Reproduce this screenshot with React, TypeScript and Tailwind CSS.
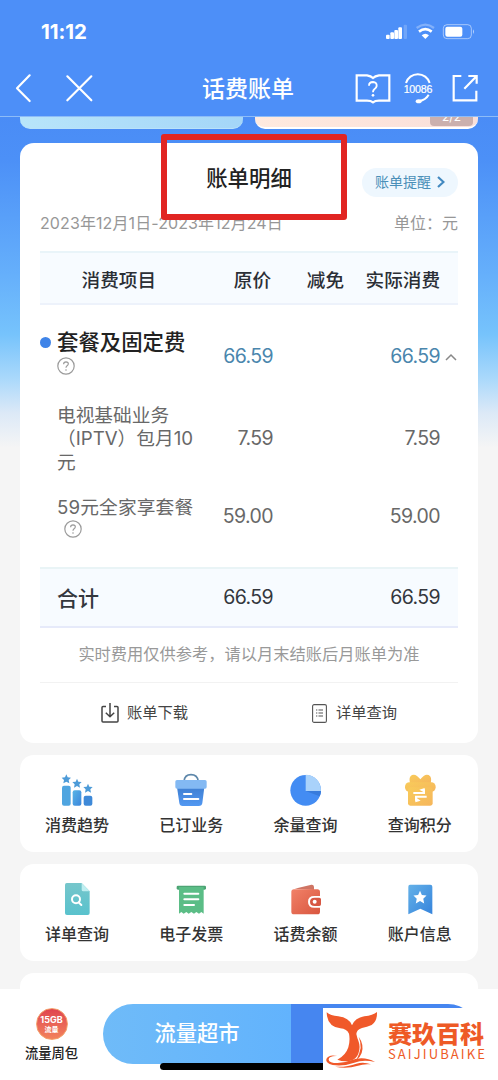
import type { ReactNode } from "react";

interface BillRow {
  name: string[];
  price: string;
  actual: string;
}

interface Shortcut {
  label: string;
  icon: ReactNode;
}

const rowGrid = "grid grid-cols-[162px_71px_71px_96px_18px]";

const STAR = "M0 -14 L4 -5 L14 -4 L7 3 L9 13 L0 8 L-9 13 L-7 3 L-14 -4 L-4 -5 Z";

function StatusIcons() {
  return (
    <svg className="h-6 w-[92px]" viewBox="1152 60 276 72" fill="#fff">
      <rect x="1158" y="104" width="11" height="13" rx="3" />
      <rect x="1171" y="97" width="11" height="20" rx="3" />
      <rect x="1183" y="90" width="11" height="27" rx="3" />
      <rect x="1195" y="82" width="11" height="35" rx="3" />
      <rect x="1211" y="74" width="10" height="43" rx="3" opacity="0.2" />
      <path d="M1250 84 Q1276 64 1302 84" fill="none" stroke="#fff" strokeWidth="7" opacity="0.3" />
      <path d="M1257 95 Q1276 80 1295 95" fill="none" stroke="#fff" strokeWidth="8" />
      <path d="M1265 106 Q1276 97 1287 106 L1276 117 Z" />
      <rect x="1330" y="74" width="84" height="42" rx="11" fill="none" stroke="#fff" strokeWidth="3" opacity="0.5" />
      <rect x="1336" y="80" width="51" height="30" rx="6" />
      <path d="M1419 88 q6 7 0 14 Z" opacity="0.6" />
    </svg>
  );
}

function Header() {
  return (
    <header className="h-[116px] bg-[#4d8ff8] text-white">
      <div className="flex h-16 items-center justify-between pl-[41px] pr-[22px]">
        <span className="text-[20.5px] font-bold leading-none tracking-[-0.1px]">11:12</span>
        <StatusIcons />
      </div>
      <div className="flex h-12 items-center pl-3.5">
        <svg className="h-[30px] w-20" viewBox="45 219 240 90" fill="none" stroke="#fff" strokeWidth="6.5" strokeLinecap="round" strokeLinejoin="round">
          <path d="M92 226 L54 265 L92 303" />
          <path d="M205 229 L277 301 M277 229 L205 301" />
        </svg>
        <h1 className="ml-[108px] mt-0.5 w-[93px] whitespace-nowrap text-[23px] font-medium leading-none">话费账单</h1>
        <svg className="ml-[59px] h-9 w-[126px]" viewBox="1065 210 378 108" fill="none" stroke="#fff" strokeWidth="6.5">
          <path d="M1073 226 H1104 Q1116 228 1122 234 Q1128 228 1140 226 H1171 V302 H1140 Q1128 302 1122 307 Q1116 302 1104 302 H1073 Z" />
          <path d="M1110 257 Q1110 246 1122 246 Q1134 247 1133 258 Q1132 264 1126 268 Q1122 271 1122 277" strokeWidth="5.5" />
          <circle cx="1122" cy="286" r="4" fill="#fff" stroke="none" />
          <path d="M1221 249 A37 37 0 0 1 1292 249 M1289 284 Q1280 300 1261 303" strokeWidth="6" />
          <ellipse cx="1259" cy="304" rx="9" ry="6" fill="#fff" stroke="none" />
          <text x="1257" y="278" fill="#fff" stroke="#fff" strokeWidth="0.6" fontSize="32" textAnchor="middle" textLength="86" fontFamily="Liberation Sans, sans-serif">10086</text>
          <path d="M1387 228 H1364 V301 H1432 V272 M1433 251 V228 H1408 M1431 230 L1396 266" />
        </svg>
      </div>
    </header>
  );
}

function HelpIcon() {
  return (
    <svg className="block size-[18px]" viewBox="0 0 18 18" fill="none" stroke="#9b9b9b" strokeWidth="1.2">
      <circle cx="9" cy="9" r="8.2" />
      <path d="M6.6 7.2 Q6.7 4.9 9 4.9 Q11.4 5 11.3 7 Q11.2 8.2 9.9 8.9 Q9 9.5 9 10.8" />
      <circle cx="9" cy="13" r="0.8" fill="#9b9b9b" stroke="none" />
    </svg>
  );
}

function Amount({ children }: { children: ReactNode }) {
  return <span className="text-right text-[19.5px] leading-none tracking-[-0.6px]">{children}</span>;
}

function BillCard() {
  const iptv: BillRow = { name: ["电视基础业务", "（IPTV）包月10", "元"], price: "7.59", actual: "7.59" };
  const family: BillRow = { name: ["59元全家享套餐"], price: "59.00", actual: "59.00" };

  return (
    <section className="relative h-[600px] rounded-[14px] bg-white px-5">
      <div className="grid h-[62px] grid-cols-[1fr_auto_1fr] items-center pt-3.5">
        <h2 className="col-start-2 -mt-1 text-[21.4px] font-medium leading-none text-[#222]">账单明细</h2>
        <button className="mt-0.5 flex h-[29px] w-24 items-center justify-self-end rounded-full bg-[#eef7fe] pl-[13px] text-sm text-[#4a8fb8]">
          账单提醒
          <svg className="ml-1.5 h-3 w-2" viewBox="0 0 8 12" fill="none" stroke="#4289c0" strokeWidth="2.2">
            <path d="M1 1 L6.5 6 L1 11" />
          </svg>
        </button>
      </div>
      <div className="flex h-[46px] items-center justify-between pb-[11px] text-base leading-none text-[#979797]">
        <span className="tracking-[0.1px]">2023年12月1日-2023年12月24日</span>
        <span>单位：元</span>
      </div>

      <div className={`${rowGrid} h-[54px] items-center border-y-2 border-t-[#e9f4f9] border-b-[#edf2fb] bg-[#f7fbff] pt-1 text-right text-[18.6px] font-medium leading-none text-[#2b2f36]`}>
        <span className="pr-[46px]">消费项目</span>
        <span className="pr-0.5">原价</span>
        <span>减免</span>
        <span>实际消费</span>
      </div>

      <div className={`${rowGrid} h-[99px] items-center pt-1 text-[#4a86ad]`}>
        <div className="-mt-2.5 flex gap-1.5">
          <span className="mt-[9px] size-[11px] shrink-0 rounded-full bg-[#3f84e8]" />
          <div className="whitespace-nowrap">
            <div className="text-[21.4px] font-medium leading-[29px] text-[#222]">套餐及固定费</div>
            <HelpIcon />
          </div>
        </div>
        <Amount>{"66.59"}</Amount>
        <span />
        <Amount>{"66.59"}</Amount>
        <svg className="ml-[5px] h-2 w-3" viewBox="0 0 12 8" fill="none" stroke="#888" strokeWidth="1.5">
          <path d="M1 7 L6 2 L11 7" />
        </svg>
      </div>

      <div className={`${rowGrid} h-[70px] items-center text-[#686868]`}>
        <div className="whitespace-nowrap pl-[17px] text-[18.7px] leading-[23.4px]">
          {iptv.name.map((line) => (
            <div key={line}>{line}</div>
          ))}
        </div>
        <Amount>{iptv.price}</Amount>
        <span />
        <Amount>{iptv.actual}</Amount>
      </div>

      <div className={`${rowGrid} h-[93px] items-center pb-[7px] text-[#686868]`}>
        <div className="whitespace-nowrap pl-[17px] text-[18.7px] leading-[23.4px]">
          <div className="tracking-[0.15px]">{family.name}</div>
          <div className="pl-[7px] pt-px">
            <HelpIcon />
          </div>
        </div>
        <Amount>{family.price}</Amount>
        <span />
        <Amount>{family.actual}</Amount>
      </div>

      <div className={`${rowGrid} h-[61px] items-center border-y-2 border-t-[#e9f4f6] border-b-[#e6eafa] bg-[#f7fbff] text-[#33373d]`}>
        <span className="pl-[17px] pt-0.5 text-[21px] font-medium leading-none">合计</span>
        <Amount>{"66.59"}</Amount>
        <span />
        <Amount>{"66.59"}</Amount>
      </div>

      <p className="h-[55px] border-b border-[#f2f2f2] text-center text-[16.25px] leading-[53px] text-[#999]">
        实时费用仅供参考，请以月末结账后月账单为准
      </p>

      <div className="grid h-[60px] grid-cols-2 items-center text-[15.3px] text-[#444]">
        <div className="flex items-center justify-center gap-2">
          <svg className="h-5 w-[18px]" viewBox="0 0 18 20" fill="none" stroke="#444" strokeWidth="1.5" strokeLinejoin="round">
            <path d="M5 3.5 H2 Q1 3.5 1 4.5 V18 Q1 19 2 19 H16 Q17 19 17 18 V4.5 Q17 3.5 16 3.5 H13 M9 0 V13.5 M4.8 9.8 L9 13.8 L13.2 9.8" />
          </svg>
          账单下载
        </div>
        <div className="flex items-center justify-center gap-[9px] pl-0.5">
          <svg className="h-[19px] w-[15px]" viewBox="0 0 15 19" fill="none" stroke="#555" strokeWidth="1.1">
            <rect x="0.6" y="0.6" width="13.8" height="17.8" rx="1.5" />
            <path d="M4 6 H5.3 M6.5 6 H11 M4 9 H5.3 M6.5 9 H11 M4 12 H5.3 M6.5 12 H11" />
          </svg>
          详单查询
        </div>
      </div>

      {/* highlight around the card title */}
      <div className="absolute left-[141px] top-[-9px] h-[86px] w-[186px] rounded-[3px] border-[6px] border-[#e12522]" />
    </section>
  );
}

const usage: Shortcut[] = [
  {
    label: "消费趋势",
    icon: (
      <svg className="size-9" viewBox="177 66 108 108">
        <defs>
          <linearGradient id="bars" x1="0" y1="0" x2="1" y2="1">
            <stop stopColor="#58b4e6" />
            <stop offset="1" stopColor="#3b86dc" />
          </linearGradient>
        </defs>
        <rect x="186" y="107" width="26" height="60" rx="6" fill="#4fa5e0" />
        <rect x="218" y="121" width="26" height="46" rx="6" fill="url(#bars)" />
        <rect x="251" y="137" width="26" height="30" rx="6" fill="#3e89d8" />
        <g fill="#4d9bd8">
          <path d={STAR} transform="translate(199 87)" />
          <path d={STAR} transform="translate(231 100)" />
          <path d={STAR} transform="translate(264 115)" />
        </g>
      </svg>
    ),
  },
  {
    label: "已订业务",
    icon: (
      <svg className="size-9" viewBox="521 66 108 108">
        <defs>
          <linearGradient id="basket" x1="0" y1="0" x2="0" y2="1">
            <stop stopColor="#3f7fd2" />
            <stop offset="1" stopColor="#5298f2" />
          </linearGradient>
        </defs>
        <path d="M554 94 Q556 74 575 74 Q594 74 597 94" fill="none" stroke="#5d87aa" strokeWidth="5" />
        <path d="M533 112 H615 L609 159 Q608 168 598 168 H550 Q541 168 540 159 Z" fill="url(#basket)" />
        <rect x="528" y="90" width="94" height="26" rx="5" fill="#83b9f3" />
        <path d="M554 132 H576 M554 147 H597" stroke="#fff" strokeWidth="6" strokeLinecap="round" />
      </svg>
    ),
  },
  {
    label: "余量查询",
    icon: (
      <svg className="size-9" viewBox="120 66 108 108">
        <circle cx="173" cy="121" r="46" fill="#438cf3" />
        <path d="M173 123 V74 A47 47 0 0 1 219 123 Z" fill="#a9d2fb" />
        <path d="M173 123 H219 Q219 132 215 139 Z" fill="#377bdc" />
      </svg>
    ),
  },
  {
    label: "查询积分",
    icon: (
      <svg className="size-9" viewBox="464 66 108 108">
        <defs>
          <linearGradient id="gift" x1="0" y1="0" x2="1" y2="1">
            <stop stopColor="#f8cb5a" />
            <stop offset="1" stopColor="#f6b65c" />
          </linearGradient>
        </defs>
        <g fill="url(#gift)">
          <path d="M519 88 Q506 70 494 75 Q483 80 488 101 H550 Q555 80 544 75 Q532 70 519 88 Z" />
          <rect x="473" y="97" width="92" height="28" rx="13" />
          <rect x="482" y="112" width="74" height="55" rx="7" />
        </g>
        <path d="M498 129 H530 V118 M538 140 H506 V152" fill="none" stroke="#fff" strokeWidth="6" />
        <path d="M516 119 L532 114 V128 Z M520 152 L504 157 V141 Z" fill="#fff" />
      </svg>
    ),
  },
];

const account: Shortcut[] = [
  {
    label: "详单查询",
    icon: (
      <svg className="size-9" viewBox="177 393 108 108">
        <defs>
          <linearGradient id="doc" x1="0" y1="0" x2="0" y2="1">
            <stop stopColor="#76c6cb" />
            <stop offset="1" stopColor="#59c2cd" />
          </linearGradient>
        </defs>
        <path d="M200 399 H245 L269 424 V489 Q269 495 263 495 H201 Q195 495 195 489 V405 Q195 399 200 399 Z" fill="url(#doc)" />
        <path d="M245 399 V419 Q245 424 250 424 H269 Z" fill="#bfeef0" />
        <circle cx="228" cy="448" r="12" fill="none" stroke="#fff" strokeWidth="6" />
        <path d="M236 457 L244 465" stroke="#fff" strokeWidth="6" strokeLinecap="round" />
      </svg>
    ),
  },
  {
    label: "电子发票",
    icon: (
      <svg className="size-9" viewBox="521 393 108 108">
        <rect x="532" y="407" width="88" height="12" rx="4" fill="#4da474" />
        <path d="M539 411 H613 V491 L606 486 L599 491 L591 486 L584 491 L576 486 L568 491 L561 486 L553 491 L546 486 L539 491 Z" fill="#5bbd86" />
        <path d="M555 431 H597 M555 448 H597 M555 465 H584" stroke="#fff" strokeWidth="6" strokeLinecap="round" />
      </svg>
    ),
  },
  {
    label: "话费余额",
    icon: (
      <svg className="size-9" viewBox="120 393 108 108">
        <defs>
          <linearGradient id="wallet" x1="0" y1="0" x2="1" y2="1">
            <stop stopColor="#f18168" />
            <stop offset="1" stopColor="#d9563f" />
          </linearGradient>
        </defs>
        <path d="M140 416 L190 404 Q197 403 198 410 V420 Z" fill="#cf7564" />
        <rect x="130" y="418" width="86" height="75" rx="8" fill="url(#wallet)" />
        <path d="M219 438 H199 Q180 438 180 455 Q180 473 199 473 H219 Z" fill="#fff" />
        <path d="M214 443 H200 Q186 443 186 455 Q186 468 200 468 H214 Q219 468 219 463 V448 Q219 443 214 443 Z" fill="#d75743" />
        <circle cx="200" cy="455" r="6" fill="#fff" />
      </svg>
    ),
  },
  {
    label: "账户信息",
    icon: (
      <svg className="size-9" viewBox="464 393 108 108">
        <defs>
          <linearGradient id="mark" x1="0" y1="0" x2="1" y2="1">
            <stop stopColor="#64b1e8" />
            <stop offset="1" stopColor="#3684dc" />
          </linearGradient>
        </defs>
        <path d="M488 404 H549 Q555 404 555 410 V493 L519 476 L483 493 V410 Q483 404 488 404 Z" fill="url(#mark)" />
        <path d={STAR} transform="translate(518 442) scale(1.4)" fill="#fff" />
      </svg>
    ),
  },
];

function ShortcutCard({ items }: { items: Shortcut[] }) {
  return (
    <section className="grid h-[97px] shrink-0 grid-cols-4 rounded-[14px] bg-white pr-px pt-[17px]">
      {items.map((item) => (
        <div key={item.label} className="flex flex-col items-center">
          {item.icon}
          <span className="mt-[9px] text-[16px] font-medium leading-4 text-[#333]">{item.label}</span>
        </div>
      ))}
    </section>
  );
}

function BottomBar() {
  return (
    <footer className="relative flex h-[91px] bg-white pt-[15px]">
      <div className="flex w-[103px] flex-col items-center pt-1">
        <div className="flex size-8 flex-col items-center justify-center rounded-full border border-[#f4a06b] bg-linear-to-b from-[#df4350] to-[#f2825c] text-white">
          <span className="text-[9px] font-bold leading-[10px]">15GB</span>
          <span className="text-[7px] font-bold leading-[9px]">流量</span>
        </div>
        <span className="mt-[5px] text-[13.3px] font-medium leading-4 text-[#222]">流量周包</span>
      </div>
      <div className="flex h-[60px] w-[375px] overflow-hidden rounded-full text-[21.3px] font-medium text-white">
        <div className="flex w-[188px] items-center justify-center bg-linear-to-r from-[#6fbbf8] to-[#62b3fd]">流量超市</div>
        <div className="flex-1 bg-[#4686f0]" />
      </div>

      <div className="absolute left-40 top-[74px] h-[7px] w-[178px] rounded-full bg-black" />
      <div className="absolute left-[323px] top-[19px] flex h-[72px] w-[175px] bg-white text-[#ee5a26]">
        <svg className="h-[62px] w-[57px] shrink-0" viewBox="228 144 171 186" fill="#f0592a">
          <path d="M239 157 Q250 167 274 169 Q306 173 315 196 Q324 174 352 169 Q378 166 390 156 Q391 184 374 195 Q360 201 345 204 Q329 209 328 222 Q330 232 335 245 Q341 262 334 281 Q328 297 310 302 Q291 307 271 299 Q296 287 304 262 Q310 240 306 221 Q300 207 280 205 Q240 200 239 157 Z" />
          <path d="M335 230 Q352 254 344 279 Q339 293 328 300 Q338 281 341 264 Q342 247 335 230 Z" />
          <path d="M271 288 Q245 287 245 299 Q246 309 272 309 Q293 309 312 301 Q350 287 384 306 Q349 298 322 308 Q288 320 257 315 Q235 309 238 297 Q245 282 271 288 Z" />
          <path d="M264 320 Q300 322 328 311 Q350 304 372 313 Q349 311 333 317 Q299 328 264 320 Z" />
        </svg>
        <div className="ml-2 pt-[13px]">
          <div className="whitespace-nowrap text-[24px] font-black leading-[27px]">赛玖百科</div>
          <div className="whitespace-nowrap font-['Noto_Sans_CJK_SC',sans-serif] text-[13px] leading-3 tracking-[2.1px]">SAIJIUBAIKE</div>
        </div>
      </div>
    </footer>
  );
}

export default function App() {
  return (
    <div className="flex h-[1080px] w-[498px] flex-col overflow-hidden bg-[#f5f5f5] font-['Inter','Noto_Sans_CJK_SC',sans-serif]">
      <Header />
      <main className="flex min-h-0 flex-1 flex-col gap-3 overflow-hidden bg-[linear-gradient(#4a8cf6_0%,#4c90f7_5%,#65affb_18%,#76c3fc_25%,#a9d8fb_30%,#dce9f7_34%,#f5f5f5_38%)] px-5">
        <div className="-mx-5 -mb-px flex h-[13px] shrink-0 gap-3 border-t border-[#8dbcf8] px-5">
          <div className="w-[223px] rounded-b-[10px] border-b border-[#b9e2fb] bg-linear-to-r from-[#b8e5fa] to-[#a4d6f8]" />
          <div className="flex w-[223px] justify-end overflow-hidden rounded-b-[10px] border-b-2 border-white bg-linear-to-r from-[#ffeadf] to-[#f9dfda] pr-[5px]">
            <div className="flex h-[9px] w-[43px] items-end justify-center rounded-b bg-[#cbb0ae] pb-[3px] text-xs leading-none text-white">2/2</div>
          </div>
        </div>
        <div className="shrink-0 pt-[3px]">
          <BillCard />
        </div>
        <ShortcutCard items={usage} />
        <ShortcutCard items={account} />
        <section className="h-10 shrink-0 rounded-t-[14px] bg-white" />
      </main>
      <BottomBar />
    </div>
  );
}
